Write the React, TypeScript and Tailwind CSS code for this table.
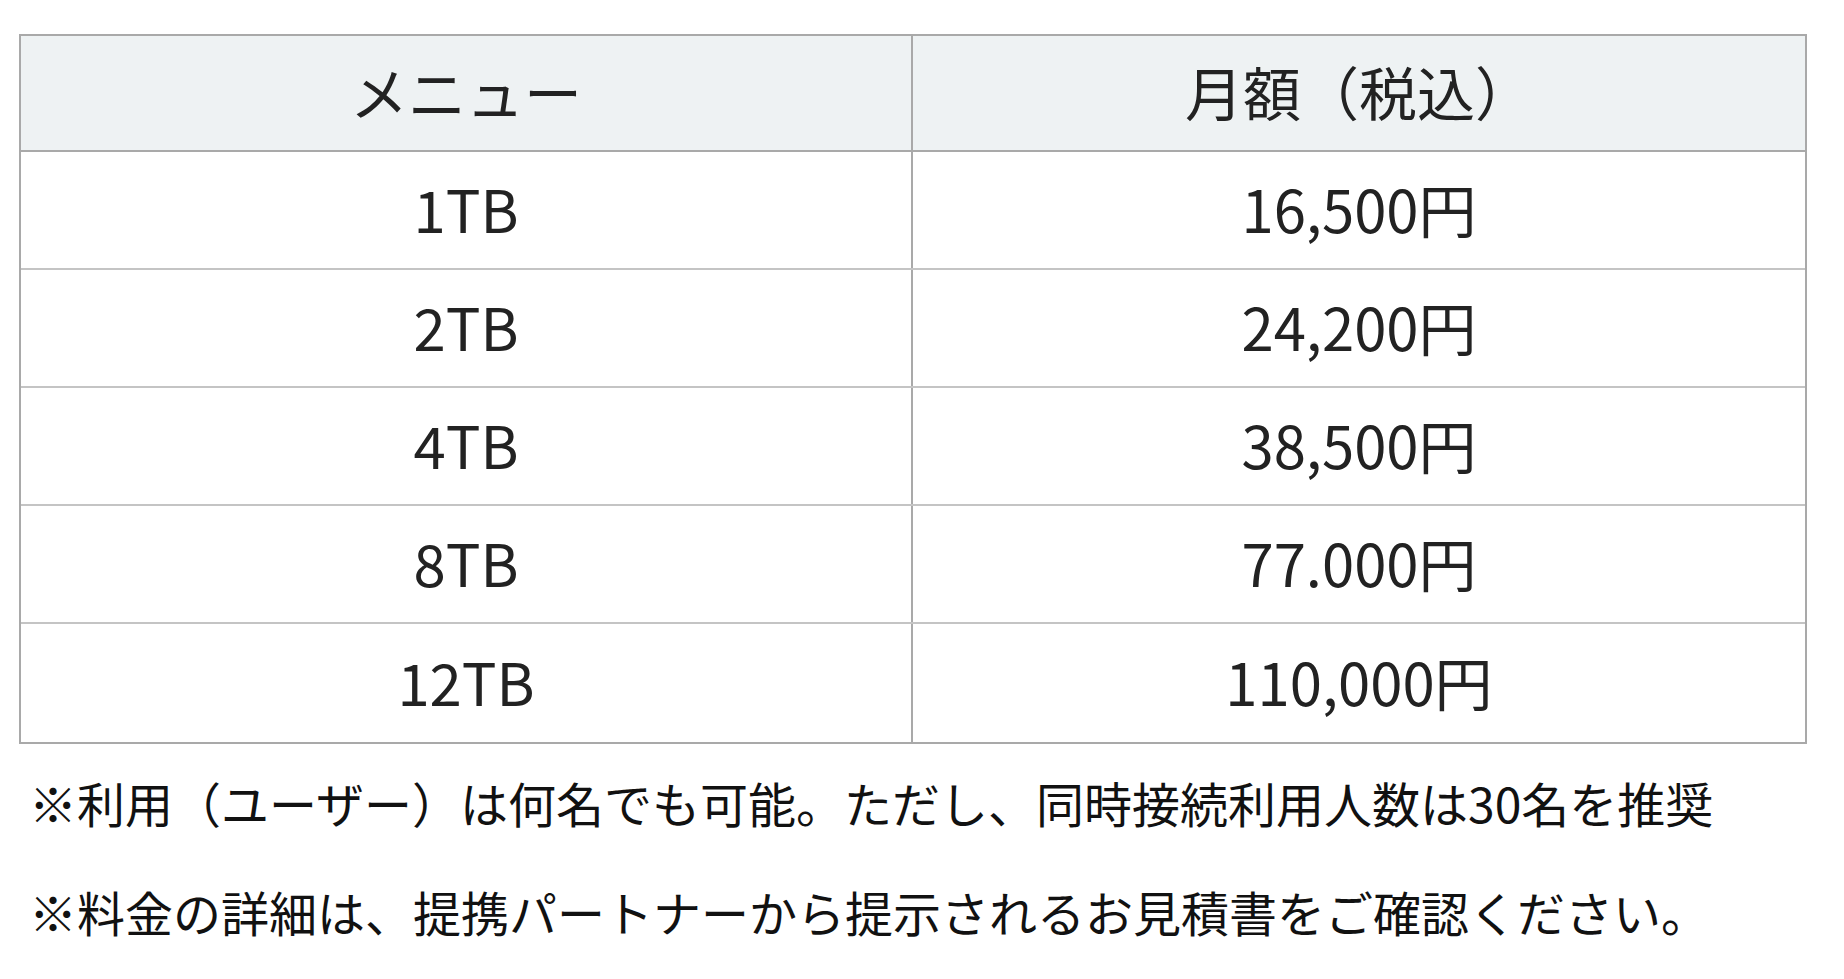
import React from "react";

const rows: [string, string][] = [
  ["1TB", "16,500円"],
  ["2TB", "24,200円"],
  ["4TB", "38,500円"],
  ["8TB", "77.000円"],
  ["12TB", "110,000円"],
];

export default function App() {
  return (
    <div
      className="w-[1844px] h-[979px] bg-white overflow-hidden pl-[19px] pt-[34px]"
      style={{ fontFamily: '"Noto Sans CJK JP", "Noto Sans", sans-serif' }}
    >
      <div className="w-[1788px] border-2 border-[#a9a9a9] text-[#222222] text-[58px]">
        <div className="grid grid-cols-2 h-[116px] bg-[#eef2f3] border-b-2 border-[#a9a9a9]">
          <div className="flex items-center justify-center border-r-2 border-[#a9a9a9] pb-[3px]">メニュー</div>
          <div className="flex items-center justify-center pb-[3px]">月額（税込）</div>
        </div>
        {rows.map(([a, b], i) => (
          <div
            key={a}
            className={
              "grid grid-cols-2 h-[118px] " +
              (i < rows.length - 1 ? "border-b-2 border-[#c4c4c4]" : "")
            }
          >
            <div className="flex items-center justify-center border-r-2 border-[#a9a9a9] pb-[3px]">{a}</div>
            <div className="flex items-center justify-center pb-[3px]">{b}</div>
          </div>
        ))}
      </div>
      <div className="text-[48px] text-[#111111] pl-[10px]">
        <p className="leading-[109px] mt-[4px]">※利用（ユーザー）は何名でも可能。ただし、同時接続利用人数は30名を推奨</p>
        <p className="leading-[109px]">※料金の詳細は、提携パートナーから提示されるお見積書をご確認ください。</p>
      </div>
    </div>
  );
}
